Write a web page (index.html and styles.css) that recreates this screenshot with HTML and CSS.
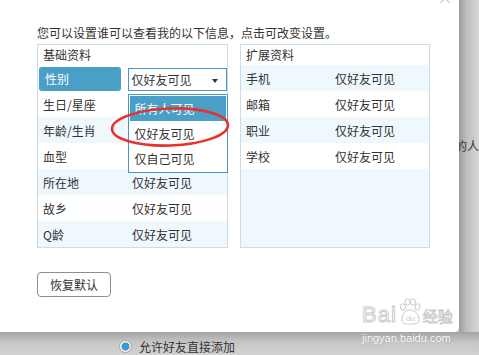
FILE: index.html
```html
<!DOCTYPE html>
<html lang="zh-CN">
<head>
    <meta charset="UTF-8">
    <title>资料权限设置</title>
    <link rel="stylesheet" href="styles.css">
</head>
<body>
    <div class="screen">
        <div class="top">
            <div class="dialog">
                <span class="close">×</span>
                <p class="intro">您可以设置谁可以查看我的以下信息，点击可改变设置。</p>
                <div class="panels">
                    <div class="panel">
                        <div class="panel-head">基础资料</div>
                        <div class="row editing">
                            <div class="active-cell">性别</div>
                            <div class="select">
                                <span>仅好友可见</span>
                                <i class="arrow"></i>
                                <div class="options">
                                    <div class="option current">所有人可见</div>
                                    <div class="option">仅好友可见</div>
                                    <div class="option">仅自己可见</div>
                                </div>
                            </div>
                        </div>
                        <!-- values of the next three rows sit under the open list -->
                        <div class="row white"><span class="label">生日/星座</span></div>
                        <div class="row"><span class="label">年龄/生肖</span></div>
                        <div class="row white"><span class="label">血型</span></div>
                        <div class="row"><span class="label">所在地</span><span>仅好友可见</span></div>
                        <div class="row white"><span class="label">故乡</span><span>仅好友可见</span></div>
                        <div class="row"><span class="label">Q龄</span><span>仅好友可见</span></div>
                    </div>
                    <div class="panel ext">
                        <div class="panel-head">扩展资料</div>
                        <div class="row"><span class="label">手机</span><span>仅好友可见</span></div>
                        <div class="row white"><span class="label">邮箱</span><span>仅好友可见</span></div>
                        <div class="row"><span class="label">职业</span><span>仅好友可见</span></div>
                        <div class="row white"><span class="label">学校</span><span>仅好友可见</span></div>
                    </div>
                </div>
                <button class="reset">恢复默认</button>

                <!-- red marker drawn over the list -->
                <svg class="mark" width="130" height="52" viewBox="0 0 130 52">
                    <ellipse cx="65" cy="27" rx="58" ry="18.5" transform="rotate(-2 65 27)"
                             fill="none" stroke="#e8302e" stroke-width="2.6"/>
                </svg>
            </div>
            <div class="side"><span>的人</span></div>
        </div>
        <div class="bottom">
            <span class="radio"></span>
            <span>允许好友直接添加</span>
        </div>

        <div class="watermark">
            <div class="logo">
                <span class="bai">Bai</span>
                <svg class="paw" width="24" height="28" viewBox="0 0 24 28">
                    <g fill="#fff" stroke="#c9c9c9" stroke-width="1">
                        <ellipse cx="5" cy="9" rx="2.6" ry="3.2"/>
                        <ellipse cx="9.5" cy="4" rx="2.6" ry="3.2"/>
                        <ellipse cx="15" cy="4" rx="2.6" ry="3.2"/>
                        <ellipse cx="19.5" cy="9" rx="2.6" ry="3.2"/>
                        <path d="M4 22 C4 15 8 12 12 12 C16 12 21 15 21 22 C21 26 17 26 12 26 C7 26 4 26 4 22 Z"/>
                    </g>
                    <text x="12.5" y="23" text-anchor="middle" font-size="8" fill="#c9c9c9" font-family="Liberation Sans, sans-serif">du</text>
                </svg>
                <span class="jy">经验</span>
            </div>
            <div class="url">jingyan.baidu.com</div>
        </div>
    </div>
</body>
</html>
```

FILE: styles.css
```css
* {
    box-sizing: border-box;
}

body {
    margin: 0;
    font-family: "Noto Sans CJK SC", sans-serif;
    font-size: 12px;
    color: #333;
    background: #cfcfcf;
}

.screen {
    width: 479px;
    height: 355px;
    display: flex;
    flex-direction: column;
    position: relative;
    overflow: hidden;
}

.top {
    display: flex;
    height: 332px;
}

.dialog {
    width: 459px;
    background: #fff;
    border-bottom-right-radius: 5px;
    position: relative;
    padding: 24px 0 0 37px;
}

.close {
    position: absolute;
    top: -11px;
    right: 6px;
    color: #c8c8c8;
    font-size: 16px;
    line-height: 17px;
}

.intro {
    margin: 0 0 3px;
    line-height: 17px;
}

.panels {
    display: flex;
    gap: 12px;
}

.panel {
    width: 191px;
    height: 204px;
    border: 1px solid #c8dcea;
    background: #eef8fd;
}

.panel.ext {
    width: 190px;
}

.panel-head {
    height: 20px;
    line-height: 20px;
    padding-left: 5px;
    background: #fff;
}

.row {
    height: 26px;
    display: flex;
    align-items: center;
    padding-left: 5px;
    line-height: 17px;
}

.row.white {
    background: #fff;
}

.label {
    width: 89px;
    flex: none;
}

.row.editing {
    background: #fff;
    align-items: flex-start;
    padding-left: 1px;
}

.active-cell {
    width: 82px;
    height: 24px;
    margin-top: 2px;
    padding-left: 6px;
    line-height: 24px;
    background: #4a9fc7;
    color: #fff;
    border-radius: 3px;
}

.select {
    position: relative;
    width: 100px;
    height: 23px;
    margin: 3px 0 0 7px;
    padding-left: 3px;
    line-height: 21px;
    border: 1px solid #4b95c4;
    background: #fff;
}

.arrow {
    position: absolute;
    right: 8px;
    top: 10px;
    border-left: 3.5px solid transparent;
    border-right: 3.5px solid transparent;
    border-top: 4px solid #333;
}

.options {
    position: absolute;
    top: 25px;
    left: -1px;
    width: 100px;
    padding: 1px;
    border: 1px solid #4b95c4;
    background: #fff;
    z-index: 2;
}

.option {
    height: 25px;
    line-height: 25px;
    padding-left: 5px;
}

.option.current {
    background: #4a9fc7;
    color: #fff;
}

.reset {
    margin-top: 24px;
    width: 74px;
    height: 25px;
    border: 1px solid #8e8e8e;
    border-radius: 4px;
    background: #fff;
    font: inherit;
    color: #333;
    padding: 0;
}

.mark {
    position: absolute;
    left: 105px;
    top: 100px;
    z-index: 3;
}

.side {
    flex: 1;
    overflow: hidden;
    padding-top: 137px;
    line-height: 17px;
    white-space: nowrap;
    background: linear-gradient(to right, #9a9a9a, #bdbdbd 35%, #d6d6d6);
}

.side span {
    margin-left: -4px;
}

.bottom {
    flex: 1;
    display: flex;
    align-items: center;
    gap: 7px;
    padding: 5px 0 0 119px;
    line-height: 17px;
    background: linear-gradient(to bottom, #a4a4a4, #c6c6c6 45%, #d2d2d2);
}

.radio {
    width: 13px;
    height: 13px;
    border-radius: 50%;
    border: 1px solid #a9a9a9;
    background: radial-gradient(circle, #3b9ad3 0, #3b9ad3 3.6px, #f4f4f4 4.4px);
}

.watermark {
    position: absolute;
    left: 362px;
    top: 302px;
    width: 94px;
    z-index: 4;
}

.logo {
    display: flex;
    align-items: flex-end;
    height: 24px;
}

.bai {
    font-family: "Liberation Sans", sans-serif;
    font-size: 22px;
    line-height: 22px;
    color: #fff;
    -webkit-text-stroke: 1px #c9c9c9;
    letter-spacing: 1px;
}

.paw {
    margin: 0 1px;
    align-self: flex-start;
    margin-top: -4px;
}

.jy {
    font-size: 15px;
    line-height: 20px;
    color: #fff;
    -webkit-text-stroke: 0.8px #c9c9c9;
}

.url {
    margin-top: 6px;
    font-family: "Liberation Sans", sans-serif;
    font-size: 11px;
    line-height: 13px;
    color: #fff;
    text-shadow: 0 0 1px #888;
}
```
